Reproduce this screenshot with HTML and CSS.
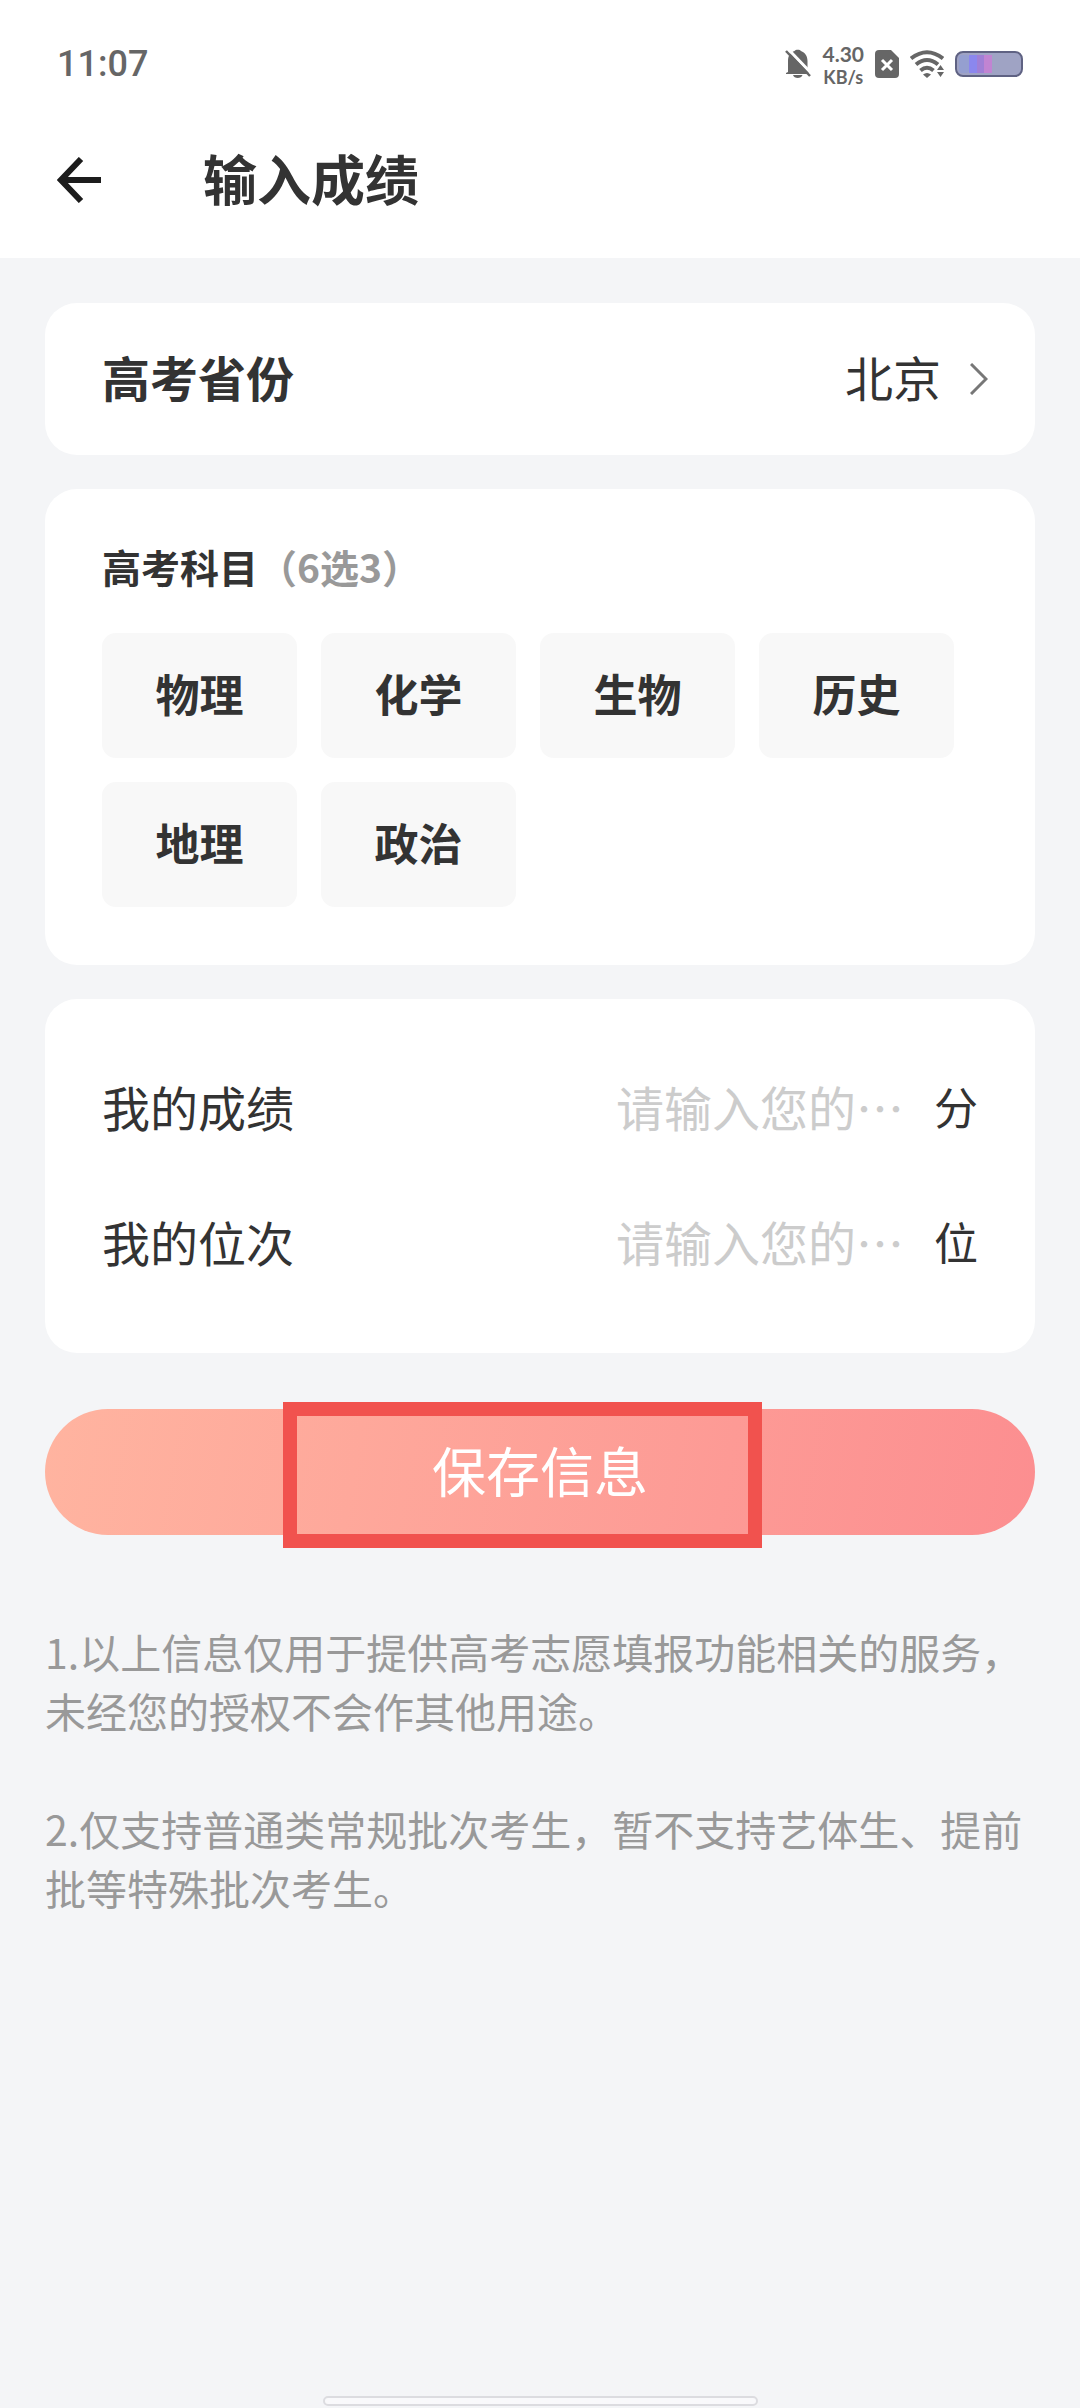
FILE: index.html
```html
<!DOCTYPE html>
<html lang="zh-CN">
<head>
  <meta charset="UTF-8">
  <meta name="viewport" content="width=device-width, initial-scale=1">
  <title>输入成绩</title>
  <link rel="stylesheet" href="styles.css">
</head>
<body>
  <header class="top">
    <div class="status-bar">
      <span class="time">11:07</span>
      <div class="status-icons">
        <svg class="icon-bell" width="26" height="30" viewBox="0 0 26 30">
          <path fill="#666" d="M3 23V12C3 6 6 3 9.500 2C10.500 .2 15 .2 16 2C20 3.500 22.500 7 22.500 12V21L24 24V25H1V24ZM8 26H17.500C16.500 30 9 30 8 26Z"/>
          <path stroke="#fff" stroke-width="3" d="M3 0L26 24"/>
          <path stroke="#666" stroke-width="2.500" d="M1 2L25 27"/>
        </svg>
        <div class="speed">
          <span class="speed-value">4.30</span>
          <span class="speed-unit">KB/s</span>
        </div>
        <svg class="icon-sim" width="24" height="28" viewBox="0 0 24 28">
          <path fill="#666" d="M4 0H16L24 8V24Q24 28 20 28H4Q0 28 0 24V4Q0 0 4 0Z"/>
          <path stroke="#fff" stroke-width="3" d="M7 10L17 20M17 10L7 20"/>
        </svg>
        <svg class="icon-wifi" width="34" height="28" viewBox="0 0 34 28">
          <g fill="none" stroke="#666" stroke-width="4">
            <path d="M1 8.500Q17-4 33 8.500"/>
            <path d="M6 14.500Q17 5.500 28 14.500"/>
            <path d="M10.500 20.500Q17 15 23.500 20.500"/>
          </g>
          <path fill="#666" d="M13 24.500Q17 21.500 21 24.500L17 28Z"/>
          <path fill="#fff" d="M30.500 12L25 19V28H34V16Z"/>
          <path fill="#666" d="M30.500 15L34 20H27ZM27 22H34L30.500 27Z"/>
        </svg>
        <svg class="icon-battery" width="68" height="26" viewBox="0 0 68 26">
          <rect x="1" y="1" width="66" height="24" rx="7" fill="#9fa3c4"/>
          <rect x="4" y="4" width="10" height="18" rx="3" fill="#959fd0"/>
          <rect x="14" y="4" width="8" height="18" fill="#8b87ee"/>
          <rect x="22" y="4" width="7" height="18" fill="#a07fd6"/>
          <rect x="29" y="4" width="8" height="18" fill="#c184d2"/>
          <rect x="1" y="1" width="66" height="24" rx="7" fill="none" stroke="#5f6283" stroke-width="2"/>
        </svg>
      </div>
    </div>
    <div class="nav-bar">
      <button class="back" type="button" aria-label="返回">
        <svg width="44" height="46" viewBox="0 0 44 46">
          <path fill="none" stroke="#1c1c1c" stroke-width="6" d="M44 23H4M24 2L4 23L24 44"/>
        </svg>
      </button>
      <h1>输入成绩</h1>
    </div>
  </header>

  <main>
    <form class="score-form">
      <section class="card province">
        <label for="province">高考省份</label>
        <div class="province-select">
          <select id="province" name="province">
            <option>北京</option>
          </select>
          <svg width="18" height="32" viewBox="0 0 18 32">
            <path fill="none" stroke="#777" stroke-width="3" d="M1 1L16 16L1 31"/>
          </svg>
        </div>
      </section>

      <section class="card subjects">
        <h2>高考科目<span class="hint">（6选3）</span></h2>
        <div class="subject-list">
          <button type="button">物理</button>
          <button type="button">化学</button>
          <button type="button">生物</button>
          <button type="button">历史</button>
          <button type="button">地理</button>
          <button type="button">政治</button>
        </div>
      </section>

      <section class="card scores">
        <div class="score-row">
          <label for="score">我的成绩</label>
          <input id="score" name="score" type="text" placeholder="请输入您的…">
          <span class="unit">分</span>
        </div>
        <div class="score-row">
          <label for="rank">我的位次</label>
          <input id="rank" name="rank" type="text" placeholder="请输入您的…">
          <span class="unit">位</span>
        </div>
      </section>

      <div class="save">
        <button class="save-btn" type="button">保存信息</button>
        <div class="save-mark"></div>
      </div>
    </form>

    <div class="notes">
      <p>1.以上信息仅用于提供高考志愿填报功能相关的服务，未经您的授权不会作其他用途。</p>
      <p>2.仅支持普通类常规批次考生，暂不支持艺体生、提前批等特殊批次考生。</p>
    </div>
  </main>

  <div class="home-bar"></div>
</body>
</html>
```
FILE: styles.css
```css
* {
  box-sizing: border-box;
}

body {
  margin: 0;
  min-height: 100vh;
  display: flex;
  flex-direction: column;
  background: #f4f5f7;
  color: #333;
  font-family: "Noto Sans CJK SC", sans-serif;
  font-size: 48px;
}

button,
input,
select {
  font: inherit;
  color: inherit;
  border: none;
  background: none;
  padding: 0;
  margin: 0;
}

svg {
  display: block;
}

/* top */
.top {
  background: #fff;
}

.status-bar {
  display: flex;
  justify-content: space-between;
  align-items: center;
  height: 102px;
  padding: 26px 57px 0;
  color: #666;
}

.time {
  font-family: Roboto, sans-serif;
  font-size: 36px;
  font-weight: 500;
}

.status-icons {
  display: flex;
  align-items: center;
  gap: 11px;
}

.speed {
  display: flex;
  flex-direction: column;
  align-items: center;
  font-family: Lato, sans-serif;
  font-weight: 700;
  font-size: 18px;
  line-height: normal;
}

.speed-value {
  font-size: 21px;
}

.nav-bar {
  display: flex;
  align-items: center;
  gap: 102px;
  height: 156px;
  padding: 0 57px;
}

h1 {
  margin: 0;
  padding-bottom: 6px;
  font-size: 54px;
  font-weight: 700;
}

/* cards */
main {
  padding: 45px;
}

.card {
  margin-bottom: 34px;
  border-radius: 32px;
  background: #fff;
}

.province {
  display: flex;
  justify-content: space-between;
  align-items: center;
  height: 152px;
  padding: 0 47px 0 57px;
}

.province label,
.province select,
.score-row label,
.score-row input,
.unit {
  padding-bottom: 6px;
}

.province label {
  font-weight: 700;
}

.province-select {
  display: flex;
  align-items: center;
  gap: 28px;
}

.province-select select {
  appearance: none;
}

.subjects {
  padding: 47px 57px 58px;
}

h2 {
  margin: 0 0 37px;
  font-size: 39px;
  line-height: 60px;
  font-weight: 700;
}

.hint {
  color: #999;
}

.subject-list {
  display: flex;
  flex-wrap: wrap;
  gap: 24px;
}

.subject-list button {
  width: 195px;
  height: 125px;
  padding-bottom: 6px;
  border-radius: 14px;
  background: #f8f8f8;
  font-size: 44px;
  font-weight: 700;
}

.scores {
  padding: 42px 57px;
}

.score-row {
  display: flex;
  align-items: center;
  height: 135px;
}

.score-row input {
  width: 290px;
  margin: 0 28px 0 auto;
}

.score-row input::placeholder {
  color: #ccc;
  opacity: 1;
}

.unit {
  font-size: 44px;
}

/* save button */
.save {
  position: relative;
  margin-top: 56px;
}

.save-btn {
  display: block;
  width: 100%;
  height: 126px;
  padding-bottom: 6px;
  border-radius: 63px;
  background: linear-gradient(100deg, #ffb4a0, #fc8e90);
  color: #fff;
  font-size: 54px;
}

/* red frame over the middle of the button */
.save-mark {
  position: absolute;
  top: -7px;
  bottom: -13px;
  left: 24%;
  width: 479px;
  border: 14px solid #f1524e;
  pointer-events: none;
}

/* notes */
.notes {
  margin-top: 87px;
  color: #999;
  font-size: 41px;
  line-height: 59px;
}

.notes p {
  margin: 0 0 59px;
}

.home-bar {
  width: 435px;
  height: 10px;
  margin: auto auto 2px;
  border: 2px solid #dcdce0;
  border-radius: 5px;
  background: #f9f9fb;
}
```
